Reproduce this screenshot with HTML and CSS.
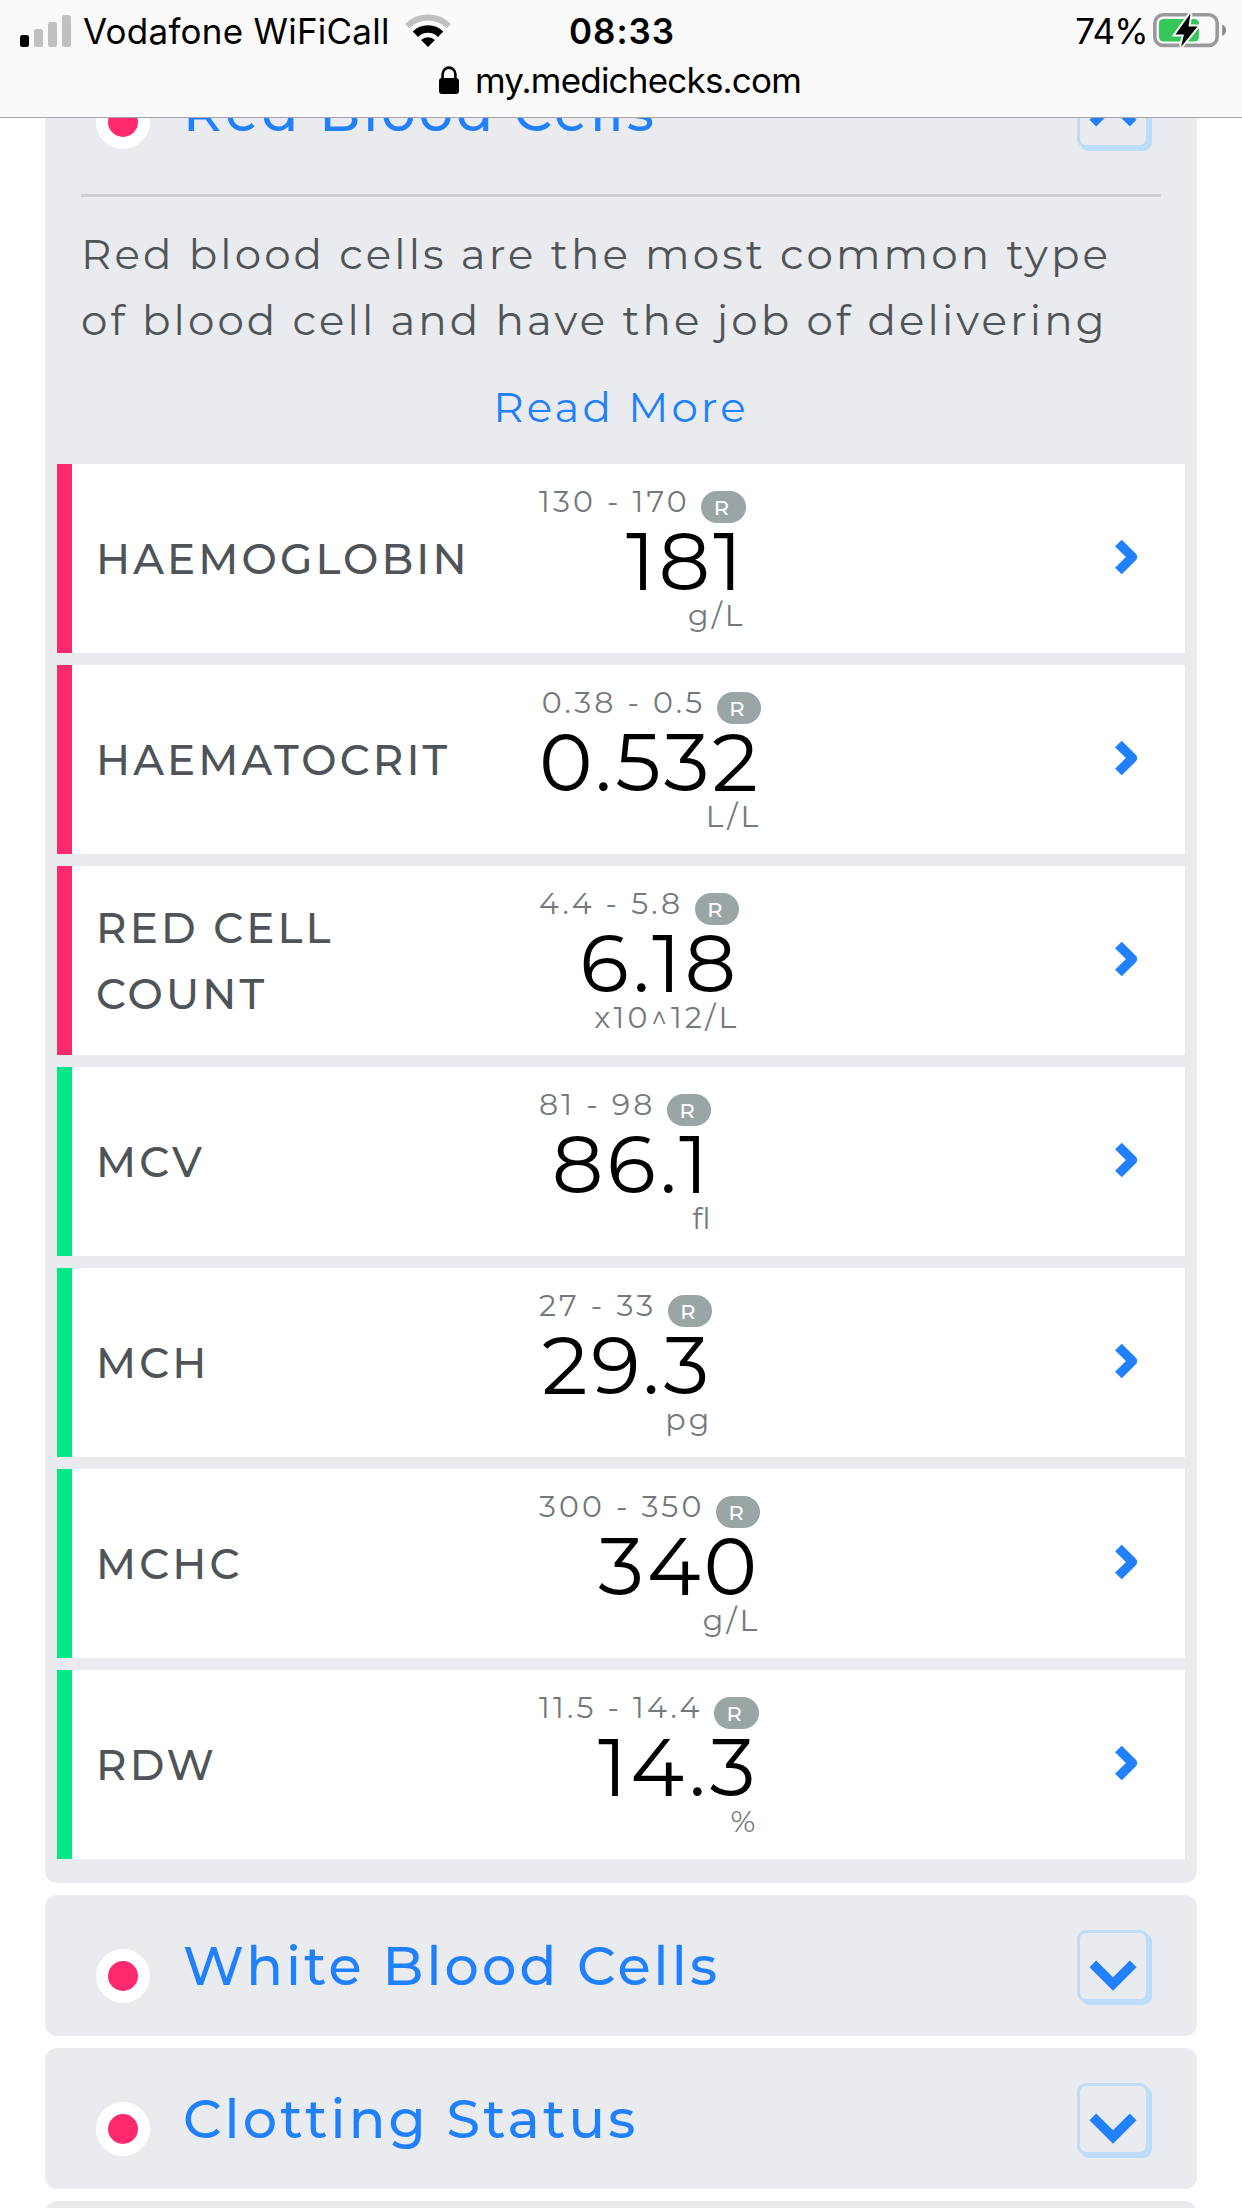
FILE: index.html
```html
<!DOCTYPE html>
<html lang="en">
<head>
<meta charset="utf-8">
<title>Medichecks</title>
<link rel="stylesheet" href="styles.css">
</head>
<body>
<header class="browser-bar">
  <div class="status">
    <div class="status-left">
      <svg class="signal" width="51" height="32" viewBox="0 0 51 32"><rect x="0" y="20" width="9" height="12" rx="2.5" fill="#000"/><g fill="#c0c0c2"><rect x="14" y="14" width="9" height="18" rx="2.5"/><rect x="28" y="7" width="9" height="25" rx="2.5"/><rect x="42" y="0" width="9" height="32" rx="2.5"/></g></svg>
      <span class="carrier">Vodafone WiFiCall</span>
      <svg class="wifi" width="46" height="33" viewBox="0 0 46 33"><path d="M2.2 12.2a29.5 29.5 0 0 1 41.6 0" fill="none" stroke="#c0c0c2" stroke-width="6"/><path d="M10.4 20.2a18 18 0 0 1 25.2 0" fill="none" stroke="#000" stroke-width="7.6"/><path d="M23 33l-7-7a10 10 0 0 1 14 0z"/></svg>
    </div>
    <span class="clock">08:33</span>
    <div class="status-right">
      <span class="percent">74%</span>
      <svg class="battery" width="74" height="36" viewBox="0 0 74 36"><rect x="1.8" y="2.8" width="62.4" height="30.6" rx="8.5" fill="none" stroke="#9a9a9d" stroke-width="3.6"/><rect x="6" y="7" width="40" height="22.5" rx="4.5" fill="#35c759"/><path d="M69.2 12.5q3.8 1.6 3.8 5.8t-3.8 5.8z" fill="#8c8c8f"/><path d="M37.5 1.5L22.5 22.5H31L28 35 44.5 14.5H35.5z" fill="#000" stroke="#fafafa" stroke-width="4" paint-order="stroke"/></svg>
    </div>
  </div>
  <div class="address">
    <svg width="20" height="28" viewBox="0 0 20 28"><rect y="12" width="20" height="16" rx="3"/><path d="M3.6 13V8.2a6.4 6.6 0 0 1 12.8 0V13" fill="none" stroke="#000" stroke-width="2.6"/></svg>
    <span class="host">my.medichecks.com</span>
  </div>
</header>
<main class="viewport">
  <div class="groups">
    <section class="group group-open">
      <div class="group-head">
        <span class="dot"></span><h2>Red Blood Cells</h2>
        <span class="toggle"><svg class="up" width="48" height="31" viewBox="0 0 48 31"><path d="M0.5 23.8L24 0.3 47.5 23.8 40.8 30.5 24 13.7 7.2 30.5z"/></svg></span>
      </div>
      <div class="intro">
        <p>Red blood cells are the most common type<br>of blood cell and have the job of delivering</p>
        <a class="more">Read More</a>
      </div>
      <div class="results">
        <div class="result high"><div class="name">Haemoglobin</div><div class="reading"><div class="range">130 - 170<span class="badge">R</span></div><div class="value">181</div><div class="unit">g/L</div></div><svg class="go" width="26" height="38" viewBox="0 0 26 38"><path d="M5.4 5L19.5 19 5.4 33"/></svg></div>
        <div class="result high"><div class="name">Haematocrit</div><div class="reading"><div class="range">0.38 - 0.5<span class="badge">R</span></div><div class="value">0.532</div><div class="unit">L/L</div></div><svg class="go" width="26" height="38" viewBox="0 0 26 38"><path d="M5.4 5L19.5 19 5.4 33"/></svg></div>
        <div class="result high"><div class="name">Red Cell<br>Count</div><div class="reading"><div class="range">4.4 - 5.8<span class="badge">R</span></div><div class="value">6.18</div><div class="unit">x10^12/L</div></div><svg class="go" width="26" height="38" viewBox="0 0 26 38"><path d="M5.4 5L19.5 19 5.4 33"/></svg></div>
        <div class="result"><div class="name">MCV</div><div class="reading"><div class="range">81 - 98<span class="badge">R</span></div><div class="value">86.1</div><div class="unit"><span class="ligature">fl</span></div></div><svg class="go" width="26" height="38" viewBox="0 0 26 38"><path d="M5.4 5L19.5 19 5.4 33"/></svg></div>
        <div class="result"><div class="name">MCH</div><div class="reading"><div class="range">27 - 33<span class="badge">R</span></div><div class="value">29.3</div><div class="unit">pg</div></div><svg class="go" width="26" height="38" viewBox="0 0 26 38"><path d="M5.4 5L19.5 19 5.4 33"/></svg></div>
        <div class="result"><div class="name">MCHC</div><div class="reading"><div class="range">300 - 350<span class="badge">R</span></div><div class="value">340</div><div class="unit">g/L</div></div><svg class="go" width="26" height="38" viewBox="0 0 26 38"><path d="M5.4 5L19.5 19 5.4 33"/></svg></div>
        <div class="result"><div class="name">RDW</div><div class="reading"><div class="range">11.5 - 14.4<span class="badge">R</span></div><div class="value">14.3</div><div class="unit">%</div></div><svg class="go" width="26" height="38" viewBox="0 0 26 38"><path d="M5.4 5L19.5 19 5.4 33"/></svg></div>
      </div>
    </section>
    <section class="group">
      <div class="group-head">
        <span class="dot"></span><h2>White Blood Cells</h2>
        <span class="toggle"><svg class="down" width="48" height="31" viewBox="0 0 48 31"><path d="M0.5 7.2L24 30.7 47.5 7.2 40.8 0.5 24 17.3 7.2 0.5z"/></svg></span>
      </div>
    </section>
    <section class="group">
      <div class="group-head">
        <span class="dot"></span><h2>Clotting Status</h2>
        <span class="toggle"><svg class="down" width="48" height="31" viewBox="0 0 48 31"><path d="M0.5 7.2L24 30.7 47.5 7.2 40.8 0.5 24 17.3 7.2 0.5z"/></svg></span>
      </div>
    </section>
    <section class="group"><div class="group-head"></div></section>
  </div>
</main>
</body>
</html>
```
FILE: styles.css
```css
* { box-sizing: border-box; }

body {
  margin: 0;
  width: 1242px;
  height: 2208px;
  overflow: hidden;
  display: flex;
  flex-direction: column;
  background: #fff;
  font-family: Montserrat, Inter, sans-serif;
  letter-spacing: 3.12px;
}

svg { display: block; flex: none; }

/* Browser chrome */
.browser-bar {
  flex: none;
  height: 118px;
  background: #fafafa;
  border-bottom: 1px solid #a5a5a8;
  color: #000;
  font-family: Inter, sans-serif;
  font-size: 35px;
}
.status {
  display: grid;
  grid-template-columns: 1fr auto 1fr;
  height: 60px;
  padding: 0 15px 0 20px;
  align-items: center;
}
.status-left { display: flex; align-items: center; }
.signal { margin-right: 12px; }
.carrier { letter-spacing: 0.24px; line-height: 60px; padding-top: 1px; }
.wifi { margin-left: 15px; margin-top: -1px; }
.clock { font-weight: 600; letter-spacing: 1px; line-height: 60px; padding-top: 1px; margin-right: 3px; }
.status-right { display: flex; align-items: center; justify-content: flex-end; }
.percent { letter-spacing: -0.7px; line-height: 60px; padding-top: 1px; margin-right: 5px; }
.battery { margin-top: -1px; }
.address {
  display: flex;
  align-items: center;
  justify-content: center;
  gap: 16px;
  height: 40px;
  padding-right: 2px;
}
.host { letter-spacing: -0.8px; line-height: 40px; }

/* Scrolled page content */
.viewport { flex: 1; min-height: 0; overflow: hidden; }
.groups {
  margin: -77px 45px 0;
  display: flex;
  flex-direction: column;
  gap: 12px;
}
.group { background: #e9ebee; border-radius: 12px; }
.group-open { padding-bottom: 24px; }
.group-head {
  display: flex;
  align-items: center;
  height: 141px;
  padding: 0 45px 0 51px;
}
.dot {
  width: 54px;
  height: 54px;
  margin-top: 21px;
  border: 12px solid #fff;
  border-radius: 50%;
  background: #ff2a6d;
}
h2 {
  flex: 1;
  margin: 0 0 0 33px;
  font-size: 54px;
  font-weight: 500;
  line-height: 66px;
  color: #2080fe;
}
.toggle {
  width: 72px;
  height: 72px;
  margin-right: 3px;
  border: 3px solid #bcdcfa;
  border-radius: 9px;
  box-shadow: 3px 3px 0 #bcdcfa;
  display: flex;
  justify-content: center;
}
.toggle svg { fill: #2080fe; }
.down { margin-top: 27px; }
.up { margin-top: 17px; }

.intro {
  margin: 12px 36px 24px;
  border-top: 3px solid #cdd0d4;
  padding-top: 24px;
  color: #4f5458;
  font-size: 42px;
  line-height: 66px;
}
.intro p { margin: 0 0 21px; white-space: nowrap; }
.more { display: block; text-align: center; color: #2080fe; }

/* Result rows */
.results {
  display: flex;
  flex-direction: column;
  gap: 12px;
  padding: 0 12px;
}
.result {
  display: flex;
  align-items: center;
  height: 189px;
  padding: 0 46px 0 24px;
  border-left: 15px solid #00e887;
  background: #fff;
}
.high { border-left-color: #ff2a6d; }
.name {
  width: 443px;
  font-size: 42px;
  font-weight: 500;
  line-height: 66px;
  text-transform: uppercase;
  color: #4f5458;
}
.reading {
  align-self: flex-start;
  padding-top: 20px;
  text-align: right;
  color: #74797c;
  font-size: 30px;
}
.range {
  display: flex;
  justify-content: flex-end;
  height: 37px;
  line-height: 36px;
}
.badge {
  width: 44.5px;
  height: 32px;
  margin: 7px 0 0 11.5px;
  padding-left: 12.5px;
  border-radius: 16px;
  background: #9aa5a6;
  color: #fff;
  font-size: 21px;
  font-weight: 500;
  line-height: 34px;
  text-align: left;
}
.value { font-size: 81px; line-height: 81px; color: #000; }
.unit { line-height: 28px; }
.ligature { letter-spacing: 0; margin-right: 1px; }
.go {
  margin: -3px 0 0 auto;
  fill: none;
  stroke: #2080fe;
  stroke-width: 9.5;
  stroke-linejoin: round;
}
```
